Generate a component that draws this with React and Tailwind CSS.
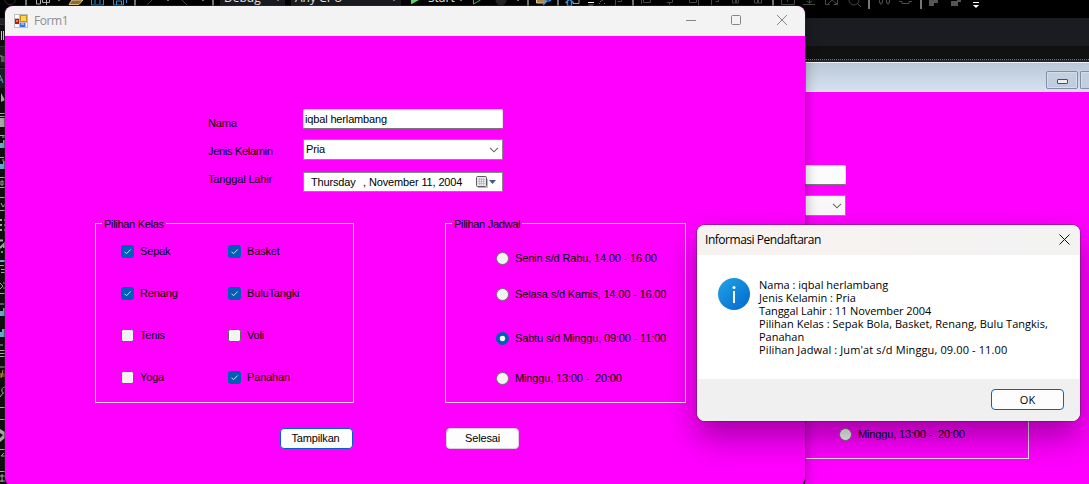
import React from "react";

const form = "font-['Liberation_Sans',sans-serif] text-[11px] tracking-[-0.15px] text-black";

function CheckItem({ label, checked, className = "" }) {
  return (
    <div className={`flex items-center gap-[6px] whitespace-pre ${className}`}>
      <svg width="13" height="13" viewBox="0 0 13 13" className="shrink-0">
        <rect x="0.5" y="0.5" width="12" height="12" rx="2" fill={checked ? "#005fb8" : "#f3f3f3"} stroke={checked ? "#005fb8" : "#626262"} />
        {checked && <path d="M3.5 6.7 L5.5 8.7 L9.7 4.5" fill="none" stroke="#d5e6f5" strokeWidth="1" />}
      </svg>
      <span>{label}</span>
    </div>
  );
}

function RadioItem({ label, checked, className = "" }) {
  return (
    <div className={`flex h-4 items-center gap-[6px] whitespace-pre ${className}`}>
      <svg width="13" height="13" viewBox="0 0 13 13" className="shrink-0">
        <circle cx="6.5" cy="6.5" r="6" fill={checked ? "#005fb8" : "#f3f3f3"} stroke={checked ? "#005fb8" : "#707070"} />
        {checked && <circle cx="6.5" cy="6.5" r="2.7" fill="#fff" />}
      </svg>
      <span>{label}</span>
    </div>
  );
}

function Chevron() {
  return (
    <svg width="10" height="6" viewBox="0 0 10 6" className="mr-[3px] shrink-0">
      <path d="M1 0.8 L5 4.8 L9 0.8" fill="none" stroke="#666" strokeWidth="1.1" />
    </svg>
  );
}

function Toolbar() {
  return (
    <div className="relative h-[18px] w-full overflow-hidden bg-black">
      <svg width="1089" height="18" className="block" fill="none">
        <rect x="220" width="65" height="6" fill="#1b1c21" />
        <rect x="291" width="110" height="6" fill="#1b1c21" />
        <circle cx="10" cy="-1" r="5.5" stroke="#303030" />
        <g fill="#77777a">
          <rect x="25" width="2" height="6" /><rect x="134" width="2" height="6" /><rect x="212" width="2" height="6" />
          <rect x="527" width="2" height="6" /><rect x="557" width="2" height="6" /><rect x="632" width="2" height="6" />
          <rect x="772" width="2" height="6" /><rect x="868" width="2" height="9" /><rect x="920" width="2" height="9" />
        </g>
        <path d="M36.5 0v4h4V0M42.5 0v2.5h7V0M46.500 0v5" stroke="#b7b7b7" />
        <path d="M69 4.500 L72 0H83L79 4.500Z" fill="#8b713e" stroke="#e8c987" />
        <path d="M91.500 0v5h12V0M95 0v4M100 0v4M113.500 0v5h10V0M126.500 0v3M116.500 5V1h5v4" stroke="#3395df" />
        <path d="M147 5l6-6M187 5l-6-6" stroke="#4a4a4a" />
        <g fill="#777"><rect x="58" width="2" height="1" /><rect x="167" width="2" height="1" /><rect x="202" width="2" height="1" /><rect x="277" width="2" height="1" /><rect x="393" width="2" height="1" /><rect x="460" width="2" height="1" /><rect x="517" width="2" height="1" /></g>
        <path d="M411 0h8l-8 4.500Z" fill="#62d66b" />
        <path d="M473.500 0v4l7-4" stroke="#47b750" />
        <circle cx="501" cy="0" r="5.5" fill="#252525" />
        <path d="M536.500 0v3h9V0" fill="#b08a50" stroke="#f2ce86" />
        <path d="M543 5l4-4M545 0a4 3 0 0 0 6 0M565.500 3l4-4 4 4M567.500 2v4h4V2" stroke="#3395df" strokeWidth="1.5" />
        <path d="M573 3.500h6V0" stroke="#aaa" />
        <path d="M588 2.500h6" stroke="#fff" /><path d="M588 4.500h6l-3 3Z" fill="#777" />
        <path d="M600 1.500h1M604 3.500h1M599 3.500h1M602 0v1" stroke="#777" />
        <path d="M615.500 0v6M617.500 1.500h4V0M641.500 0v4M643.500 0v2.500h7V0M666.500 2.500h6V0M669.500 3v2M689.500 0v2.500h7V0M698.500 0v5M711.500 0v5M715.500 1.500h3V0M732.500 0v3h3V0M736.500 0v3h2V0M754.500 0v3h3V0M758.500 0v3h3V0M781.500 0v4.500h13V0M787.500 0v2M803 4.500h12M809.500 0v3l-3-2m3 2l3-2M825.500 0v4.500h4M837.500 0v4.500h-4M828 4l4-4 5 4M879.500 0v3h3V0M881 3v2M886.500 0v3h3V0M888 3v2M899 1.500h3v2h7v-2h3" stroke="#4b4b4b" />
        <circle cx="854" cy="0" r="5" stroke="#454545" /><path d="M857 3l4 4" stroke="#454545" />
        <path d="M929 0h9v3h-4v3h-5ZM951 1h7v5h-7ZM957 0h4v2h-4Z" fill="#555" />
        <path d="M973 2.500h6" stroke="#fff" /><path d="M973 5h6l-3 3Z" fill="#fff" />
      </svg>
      <div className="absolute inset-x-0 top-[-10px] h-4 font-['Open_Sans',sans-serif] text-xs leading-4 text-[#e8e8e8]">
        <span className="absolute left-[224px]">Debug</span>
        <span className="absolute left-[295px]">Any CPU</span>
        <span className="absolute left-[428px]">Start</span>
      </div>
    </div>
  );
}

function Toolbox() {
  return (
    <svg width="5" height="466" viewBox="0 18 5 466" className="block shrink-0 bg-[#111]" fill="none">
      <rect y="18" width="5" height="6" fill="#26272c" />
      <path d="M0 24.500h5M0 46.500h5M0 68.500h5" stroke="#3b3c40" />
      <rect y="47" width="5" height="19" fill="#1e1f24" /><rect y="69" width="5" height="19" fill="#20222a" />
      <path d="M1.500 31v9M3.500 31v9" stroke="#e0dfe8" />
      <path d="M0 56h2v6M4 56v6" stroke="#b3b3b3" />
      <path d="M0 75l3 8M0 80h3" stroke="#76a9d8" />
      <path d="M1 93v9l4-2ZM0 113h5v1H0ZM0 116h5v1H0ZM0 118h5v9H0Z" fill="#b9b9b9" />
      <path d="M0 135.500h5M2 137h3M0 157.500h4M3 159v2M0 304h4" stroke="#bbb" />
      <path d="M0 143h3v-3h2v8H0ZM0 164h3v-3h2v8H0ZM0 311h3v-3h2v8H0ZM0 332h2v-3h3v8H0Z" fill="#70b8df" />
      <path d="M0 177.500h5M0 187.500h5M1 181h2v4H1ZM0 197.500h5M0 210.500h5M1 203l2 4 2-3" stroke="#b9b9b9" />
      <path d="M0 220h2M4 220h1M0 225h2M4 225h1M0 230h2M4 230h1M0 240.500h3M0 248l4-4v4" stroke="#b9b9b9" strokeWidth="2" />
      <rect x="1" y="251" width="2" height="2" fill="#50c463" /><path d="M0 261h5" stroke="#70b8df" strokeWidth="2" />
      <path d="M0 265.500h4M1 269.500h4M1 272.500h4M0 283l3 3-3 3M3 283h2M3 288h2M0 293.500h5M0 345h3M0 350.500h5M0 353.500h5M0 356.500h5M0 367h5" stroke="#b9b9b9" />
      <path d="M0 374h5M3 370l-2 8M0 376h5" stroke="#e79a36" />
      <path d="M5 387c-4 0-4 6-1 6M3 393l-3 4M0 407.500h5M0 419.500h5M0 449.500h5M4 453l-3 3h4M0 471.500h5M0 476h5M2 474v8M0 481h5" stroke="#b9b9b9" />
      <path d="M0 429l5 3v6l-5 4v-4l3-3-3-2Z" fill="#b9b9b9" />
    </svg>
  );
}

function BackWindow() {
  return (
    <div className="flex h-[466px] w-[284px] flex-col">
      <div className="h-7 shrink-0 bg-[#1b1c21]" />
      <div className="h-[14px] shrink-0 border-b border-dotted border-[#777] bg-[#111]" />
      <div className="h-[2px] shrink-0 bg-[#25272b]" />
      <div className="flex h-[30px] shrink-0 justify-end gap-[2px] overflow-hidden border-t border-[#edf2f6] bg-linear-to-b from-[#bac8d7] to-[#d7e3f0] pt-[8px]">
        <div className="flex h-[18px] w-8 items-center justify-center rounded-[2px] border border-[#7f8eaa] bg-linear-to-b from-[#c4d1df] to-[#bdcbdc] pt-[3px] shadow-[inset_0_0_0_1px_#d5dfec]">
          <div className="h-[5px] w-[11px] rounded-[1px] border border-[#4c4f5c] bg-[#eee]" />
        </div>
        <div className="h-[18px] w-[9px] rounded-l-[2px] border border-r-0 border-[#7f8eaa] bg-[#c1cfde] shadow-[inset_1px_1px_0_#d5dfec]" />
      </div>
      <div className={`flex min-h-0 grow flex-col items-start bg-[#ff00ff] pt-[73px] ${form}`}>
        <div className="h-5 w-[41px] rounded-r-[2px] border border-l-0 border-[#dedede] border-b-[#7a7a7a] bg-[#fcfcfc]" />
        <div className="mt-[10px] flex h-[21px] w-[41px] items-center justify-end border border-l-0 border-[#898989] bg-[#f8f8f8]"><Chevron /></div>
        <div className="mt-[64px] flex h-[179px] w-[224px] flex-col justify-end border-r border-b border-[#dcdcdc] pb-[16px] pl-[34px]">
          <RadioItem label="Minggu, 13:00 -  20:00" />
        </div>
      </div>
    </div>
  );
}

function FormWindow() {
  return (
    <div className="absolute top-[6px] left-[5px] flex h-[480px] w-[800px] flex-col overflow-hidden rounded-[8px] bg-[#ff00ff] shadow-[0_4px_14px_rgba(0,0,0,0.32),0_0_0_1px_rgba(70,40,70,0.5)]">
      <div className="flex h-[30px] shrink-0 items-center bg-[#f3f3f3] pl-[9px]">
        <svg width="14" height="14" viewBox="0 0 14 14">
          <rect width="14" height="14" fill="#bdbdbd" />
          <path d="M1 1h4v3H1ZM1 10h4v3H1ZM12 9h1v4h-1Z" fill="#fff" />
          <rect x="6.500" y="1.500" width="6" height="6" fill="#ffd451" stroke="#c99112" />
          <rect x="1" y="5" width="4" height="5" fill="#b71c12" /><rect x="2" y="6" width="2" height="2" fill="#e87960" />
          <rect x="6" y="9" width="5" height="4" fill="#3978dc" /><rect x="7" y="9" width="3" height="2" fill="#8ab8fa" />
        </svg>
        <span className="ml-[6px] font-['Open_Sans',sans-serif] text-xs tracking-[-0.4px] text-[#8e8e8e]">Form1</span>
        <svg width="120" height="30" viewBox="0 0 120 30" fill="none" stroke="#858585" className="ml-auto">
          <path d="M1 14.500h10M92 9l10 10M102 9l-10 10" />
          <rect x="46.500" y="9.500" width="9" height="9" rx="1" />
        </svg>
      </div>
      <div className={`flex min-h-0 grow flex-col pt-[73px] ${form}`}>
        <div className="flex pl-[203px]">
          <div className="w-[95px] leading-7">
            <p>Nama</p><p className="tracking-[-0.3px]">Jenis Kelamin</p><p>Tanggal Lahir</p>
          </div>
          <div className="flex w-[200px] flex-col">
            <div className="flex h-5 items-center rounded-[2px] border border-[#e5e5e5] border-b-[#777] bg-white pl-[1px]">iqbal herlambang</div>
            <div className="mt-[10px] flex h-[21px] items-center justify-between rounded-[1px] border border-[#898989] bg-white pl-[2px]">Pria<Chevron /></div>
            <div className="mt-3 flex h-5 items-center border border-[#888] bg-white pl-[7px] whitespace-pre">
              <span className="w-[52px]">Thursday</span><span className="w-[6px]">,</span><span>November 11, 2004</span>
              <svg width="23" height="14" viewBox="0 0 23 14" className="mr-[4px] ml-auto shrink-0">
                <rect x="1.500" y="1.500" width="10" height="10" rx="1" fill="#e6e6eb" stroke="#5d5d61" />
                <path d="M3 4.500h7M3 6.500h7M3 8.500h7M4.500 3v7M6.500 3v7M8.500 3v7" stroke="#b5b9c5" strokeWidth="0.7" />
                <path d="M3 12.500h9.500V4" fill="none" stroke="#bbb" />
                <path d="M14 5h7l-3.500 4Z" fill="#435b83" />
              </svg>
            </div>
          </div>
        </div>
        <div className="mt-[24px] flex gap-[91px] pl-[90px]">
          <fieldset className="h-[186px] w-[259px] border border-[#f0d8f0] pl-[6px]">
            <legend className="h-[13px] px-[2px] leading-[14px] tracking-[-0.3px]">Pilihan Kelas</legend>
            <div className="grid auto-rows-[42px] grid-cols-[107px_1fr] pl-[19px]">
              <CheckItem label="Sepak" checked /><CheckItem label="Basket" checked />
              <CheckItem label="Renang" checked /><CheckItem label="BuluTangki" checked />
              <CheckItem label="Tenis" /><CheckItem label="Voli" />
              <CheckItem label="Yoga" /><CheckItem label="Panahan" checked />
            </div>
          </fieldset>
          <fieldset className="h-[186px] w-[241px] border border-[#f0d8f0] pl-[6px]">
            <legend className="h-[13px] px-[2px] leading-[14px] tracking-[-0.3px]">Pilihan Jadwal</legend>
            <div className="pl-[44px]">
              <RadioItem className="mt-5" label="Senin s/d Rabu, 14.00 - 16.00" />
              <RadioItem className="mt-5" label="Selasa s/d Kamis, 14.00 - 16.00" />
              <RadioItem className="mt-7" label="Sabtu s/d Minggu, 09:00 - 11:00" checked />
              <RadioItem className="mt-6" label="Minggu, 13:00 -  20:00" />
            </div>
          </fieldset>
        </div>
        <div className="mt-[25px] flex gap-[93px] pl-[275px]">
          <button className="h-[21px] w-[73px] rounded-[4px] border border-[#0067c0] bg-[#fdfdfd] pr-[2px]">Tampilkan</button>
          <button className="h-[21px] w-[73px] rounded-[4px] border border-[#d5d5d5] bg-[#fdfdfd]">Selesai</button>
        </div>
      </div>
    </div>
  );
}

function Dialog() {
  return (
    <div className="absolute top-[225px] left-[697px] flex h-[196px] w-[383px] flex-col overflow-hidden rounded-[8px] bg-white font-['Open_Sans',sans-serif] text-[11px] text-black shadow-[0_16px_32px_rgba(0,0,0,0.36),0_0_0_1px_rgba(80,50,80,0.45)]">
      <div className="flex h-[30px] shrink-0 items-center justify-between bg-linear-to-r from-[#f7f2ef] to-[#f3f3f3] pr-[10px] pl-2">
        <span className="text-xs tracking-[-0.47px]">Informasi Pendaftaran</span>
        <svg width="11" height="11" viewBox="0 0 11 11" className="mb-[2px]"><path d="M0.500 0.500l10 10M10.500 0.500l-10 10" stroke="#111" /></svg>
      </div>
      <div className="flex grow gap-[9px] pt-[23px] pl-[21px]">
        <svg width="32" height="32" viewBox="0 0 32 32" className="shrink-0">
          <defs><linearGradient id="info" x1="0" y1="0" x2="1" y2="1"><stop stopColor="#24a4e5" /><stop offset="1" stopColor="#0067ce" /></linearGradient></defs>
          <circle cx="16" cy="16" r="16" fill="url(#info)" />
          <circle cx="16" cy="9.500" r="1.500" fill="#fff" /><rect x="15" y="13" width="2" height="12" fill="#fff" />
        </svg>
        <div className="leading-[13px] whitespace-nowrap">
          <p>Nama : iqbal herlambang</p>
          <p>Jenis Kelamin : Pria</p>
          <p className="tracking-[-0.08px]">Tanggal Lahir : 11 November 2004</p>
          <p className="tracking-[0.03px]">Pilihan Kelas : Sepak Bola, Basket, Renang, Bulu Tangkis,</p>
          <p>Panahan</p>
          <p className="tracking-[0.12px]">Pilihan Jadwal : Jum'at s/d Minggu, 09.00 - 11.00</p>
        </div>
      </div>
      <div className="flex h-[42px] shrink-0 justify-end bg-[#f0f0f0] pt-[10px] pr-4">
        <button className="h-[21px] w-[73px] rounded-[4px] border border-[#0067c0] bg-[#fdfdfd] leading-[19px]">OK</button>
      </div>
    </div>
  );
}

export default function App() {
  return (
    <div className="relative flex h-[484px] w-[1089px] flex-col overflow-hidden bg-black">
      <Toolbar />
      <div className="flex justify-between"><Toolbox /><BackWindow /></div>
      <FormWindow />
      <Dialog />
    </div>
  );
}
